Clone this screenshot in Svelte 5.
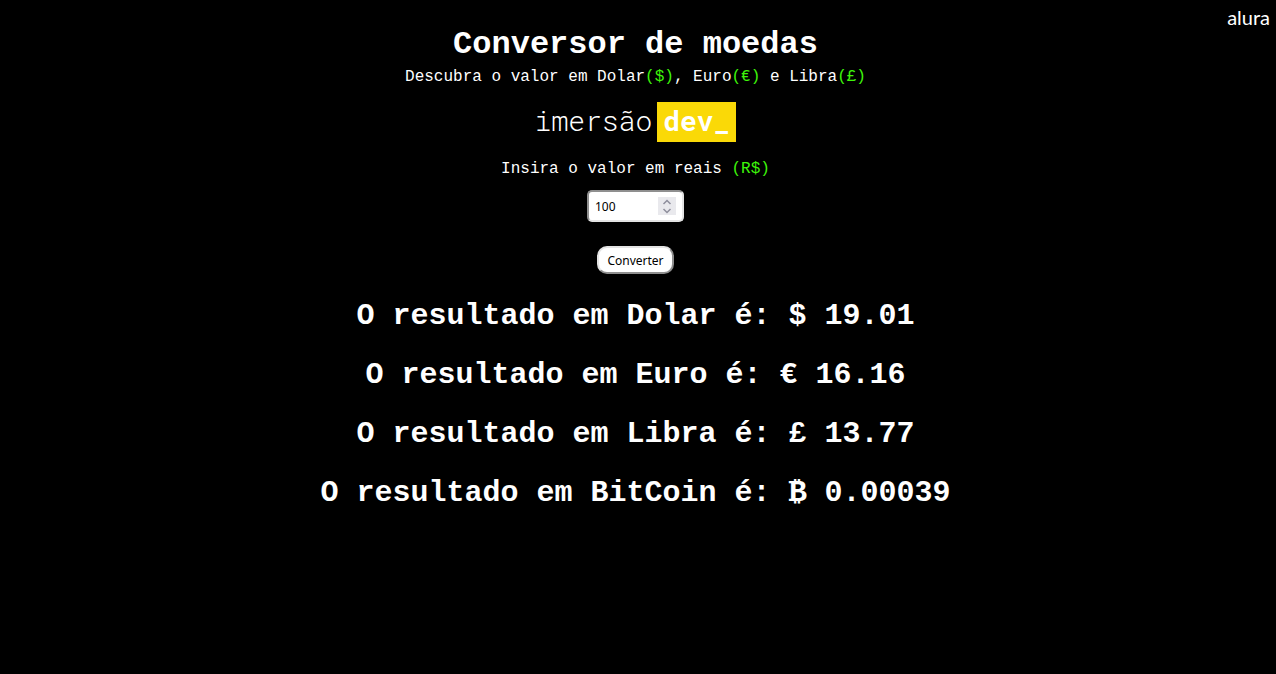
<script>
  let reais = $state(100);
  let base = $state(100);

  const currencies = [
    { name: 'Dolar', symbol: '$', rate: 0.1901, digits: 2 },
    { name: 'Euro', symbol: '€', rate: 0.1616, digits: 2 },
    { name: 'Libra', symbol: '£', rate: 0.1377, digits: 2 },
    { name: 'BitCoin', symbol: '₿', rate: 0.0000039, digits: 5 }
  ];

  function convert(event) {
    event.preventDefault();
    base = Number(reais) || 0;
  }
</script>

<div class="page">
  <header>
    <a class="alura" href="#alura">alura</a>
  </header>

  <main>
    <h1>Conversor de moedas</h1>
    <p class="intro">Descubra o valor em Dolar<b>($)</b>, Euro<b>(€)</b> e Libra<b>(£)</b></p>

    <div class="brand"><span class="light">imersão</span><span class="dev">dev_</span></div>

    <form onsubmit={convert}>
      <label for="valor">Insira o valor em reais <b>(R$)</b></label>
      <div class="field">
        <input id="valor" type="number" bind:value={reais} />
        <div class="spin">
          <button type="button" aria-label="Aumentar" onclick={() => (reais = Number(reais) + 1)}>
            <svg viewBox="0 0 10 6"><path d="M1.5 5 5 1.5 8.5 5" /></svg>
          </button>
          <button type="button" aria-label="Diminuir" onclick={() => (reais = Number(reais) - 1)}>
            <svg viewBox="0 0 10 6"><path d="M1.5 1 5 4.5 8.5 1" /></svg>
          </button>
        </div>
      </div>
      <button class="convert" type="submit">Converter</button>
    </form>

    <section>
      {#each currencies as c}
        <h2>O resultado em {c.name} é: {c.symbol} {(base * c.rate).toFixed(c.digits)}</h2>
      {/each}
    </section>
  </main>
</div>

<style>
  :global(body) {
    background: #000;
  }

  .page {
    position: relative;
    min-height: 100vh;
    box-sizing: border-box;
    padding: 25px 5px 24px 0;
    background: #000;
    color: #fff;
    font: 16px/20px 'Courier New', 'Liberation Mono', monospace;
    text-align: center;
  }

  header {
    position: absolute;
    top: 4px;
    right: 6px;
  }

  .alura {
    color: #fff;
    font: 20px/26px Lato, sans-serif;
    text-decoration: none;
  }

  h1 {
    margin: 0;
    font-size: 32px;
    line-height: 40px;
  }

  .intro {
    margin: 2px 0 15px;
  }

  b {
    color: #3ef50a;
    font-weight: 400;
  }

  .brand {
    display: flex;
    justify-content: center;
    gap: 5px;
    font: 28px/38px 'Roboto Mono', 'Liberation Mono', monospace;
  }

  .light {
    font-weight: 300;
  }

  .dev {
    padding: 0 6px 2px;
    background: #fad907;
    font-weight: 700;
  }

  form {
    display: flex;
    flex-direction: column;
    align-items: center;
    margin-top: 17px;
  }

  .field {
    position: relative;
    margin: 11px 0 24px;
  }

  input,
  .convert {
    box-sizing: border-box;
    background: #fff;
    color: #000;
    font: 12px/16px 'Noto Sans', sans-serif;
  }

  input {
    display: block;
    width: 97px;
    height: 32px;
    padding: 0 32px 0 6px;
    border: 2px inset #e3e3e3;
    border-radius: 5px;
    appearance: textfield;
  }

  input::-webkit-inner-spin-button {
    appearance: none;
    margin: 0;
  }

  .spin {
    position: absolute;
    top: 7px;
    right: 8px;
    display: grid;
    width: 18px;
    height: 18px;
    background: #e9e9ed;
  }

  .spin button {
    display: grid;
    place-items: center;
    padding: 0;
    border: 0;
    background: none;
  }

  .spin svg {
    width: 10px;
    height: 6px;
    fill: none;
    stroke: #8f8f9d;
    stroke-width: 1.5;
  }

  .convert {
    height: 28px;
    padding: 2px 8px 0;
    border: 2px outset #e3e3e3;
    border-radius: 10px;
  }

  section {
    display: grid;
    gap: 25px;
    margin-top: 25px;
  }

  h2 {
    margin: 0;
    font-size: 30px;
    line-height: 34px;
  }
</style>
